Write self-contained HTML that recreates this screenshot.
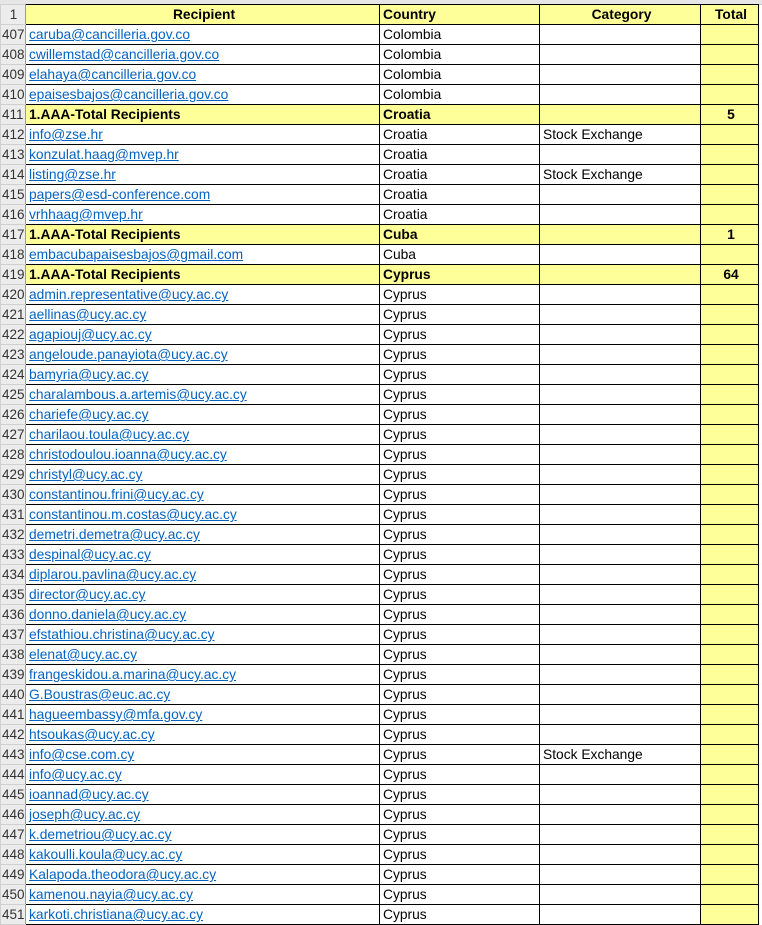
<!DOCTYPE html>
<html><head><meta charset="utf-8"><style>
html,body{margin:0;padding:0;background:#fff;width:762px;height:923px;overflow:hidden}
.top{position:absolute;left:0;top:0;width:762px;height:4px;background:#e6e6e6;border-bottom:1px solid #c8c8c8}
table{position:absolute;left:0;top:4px;border-collapse:collapse;table-layout:fixed;font-family:"Liberation Sans",sans-serif;font-size:13.8px;color:#000}
td{height:19px;padding:0 0 0 3px;border:1px solid #000;white-space:nowrap;overflow:hidden;line-height:18px;vertical-align:bottom}
td.n{background:#ececec;color:#333;border:1px solid #d0d0d0;border-right:1px solid #9a9a9a;padding:0 0 0 1px;text-align:left;font-size:13.5px}
td.y{background:#ffff99}
tr.h td{font-weight:bold;text-align:center;background:#ffff99}
tr.h td.n{background:#ececec;font-weight:normal}
tr.t td{background:#ffff99;font-weight:bold}
tr.t td.n{background:#ececec;font-weight:normal}
td.c{text-align:center}
a{color:#0563c1;text-decoration:underline}
</style></head><body>
<div class="top"></div>
<table>
<colgroup><col style="width:25px"><col style="width:354px"><col style="width:160px"><col style="width:161px"><col style="width:58px"></colgroup>
<tr class="h"><td class="n" style="text-align:center">1</td><td>Recipient</td><td style="text-align:left">Country</td><td>Category</td><td>Total</td></tr>
<tr><td class="n">407</td><td><a>caruba@cancilleria.gov.co</a></td><td>Colombia</td><td></td><td class="y"></td></tr>
<tr><td class="n">408</td><td><a>cwillemstad@cancilleria.gov.co</a></td><td>Colombia</td><td></td><td class="y"></td></tr>
<tr><td class="n">409</td><td><a>elahaya@cancilleria.gov.co</a></td><td>Colombia</td><td></td><td class="y"></td></tr>
<tr><td class="n">410</td><td><a>epaisesbajos@cancilleria.gov.co</a></td><td>Colombia</td><td></td><td class="y"></td></tr>
<tr class="t"><td class="n">411</td><td>1.AAA-Total Recipients</td><td>Croatia</td><td></td><td class="c">5</td></tr>
<tr><td class="n">412</td><td><a>info@zse.hr</a></td><td>Croatia</td><td>Stock Exchange</td><td class="y"></td></tr>
<tr><td class="n">413</td><td><a>konzulat.haag@mvep.hr</a></td><td>Croatia</td><td></td><td class="y"></td></tr>
<tr><td class="n">414</td><td><a>listing@zse.hr</a></td><td>Croatia</td><td>Stock Exchange</td><td class="y"></td></tr>
<tr><td class="n">415</td><td><a>papers@esd-conference.com</a></td><td>Croatia</td><td></td><td class="y"></td></tr>
<tr><td class="n">416</td><td><a>vrhhaag@mvep.hr</a></td><td>Croatia</td><td></td><td class="y"></td></tr>
<tr class="t"><td class="n">417</td><td>1.AAA-Total Recipients</td><td>Cuba</td><td></td><td class="c">1</td></tr>
<tr><td class="n">418</td><td><a>embacubapaisesbajos@gmail.com</a></td><td>Cuba</td><td></td><td class="y"></td></tr>
<tr class="t"><td class="n">419</td><td>1.AAA-Total Recipients</td><td>Cyprus</td><td></td><td class="c">64</td></tr>
<tr><td class="n">420</td><td><a>admin.representative@ucy.ac.cy</a></td><td>Cyprus</td><td></td><td class="y"></td></tr>
<tr><td class="n">421</td><td><a>aellinas@ucy.ac.cy</a></td><td>Cyprus</td><td></td><td class="y"></td></tr>
<tr><td class="n">422</td><td><a>agapiouj@ucy.ac.cy</a></td><td>Cyprus</td><td></td><td class="y"></td></tr>
<tr><td class="n">423</td><td><a>angeloude.panayiota@ucy.ac.cy</a></td><td>Cyprus</td><td></td><td class="y"></td></tr>
<tr><td class="n">424</td><td><a>bamyria@ucy.ac.cy</a></td><td>Cyprus</td><td></td><td class="y"></td></tr>
<tr><td class="n">425</td><td><a>charalambous.a.artemis@ucy.ac.cy</a></td><td>Cyprus</td><td></td><td class="y"></td></tr>
<tr><td class="n">426</td><td><a>chariefe@ucy.ac.cy</a></td><td>Cyprus</td><td></td><td class="y"></td></tr>
<tr><td class="n">427</td><td><a>charilaou.toula@ucy.ac.cy</a></td><td>Cyprus</td><td></td><td class="y"></td></tr>
<tr><td class="n">428</td><td><a>christodoulou.ioanna@ucy.ac.cy</a></td><td>Cyprus</td><td></td><td class="y"></td></tr>
<tr><td class="n">429</td><td><a>christyl@ucy.ac.cy</a></td><td>Cyprus</td><td></td><td class="y"></td></tr>
<tr><td class="n">430</td><td><a>constantinou.frini@ucy.ac.cy</a></td><td>Cyprus</td><td></td><td class="y"></td></tr>
<tr><td class="n">431</td><td><a>constantinou.m.costas@ucy.ac.cy</a></td><td>Cyprus</td><td></td><td class="y"></td></tr>
<tr><td class="n">432</td><td><a>demetri.demetra@ucy.ac.cy</a></td><td>Cyprus</td><td></td><td class="y"></td></tr>
<tr><td class="n">433</td><td><a>despinal@ucy.ac.cy</a></td><td>Cyprus</td><td></td><td class="y"></td></tr>
<tr><td class="n">434</td><td><a>diplarou.pavlina@ucy.ac.cy</a></td><td>Cyprus</td><td></td><td class="y"></td></tr>
<tr><td class="n">435</td><td><a>director@ucy.ac.cy</a></td><td>Cyprus</td><td></td><td class="y"></td></tr>
<tr><td class="n">436</td><td><a>donno.daniela@ucy.ac.cy</a></td><td>Cyprus</td><td></td><td class="y"></td></tr>
<tr><td class="n">437</td><td><a>efstathiou.christina@ucy.ac.cy</a></td><td>Cyprus</td><td></td><td class="y"></td></tr>
<tr><td class="n">438</td><td><a>elenat@ucy.ac.cy</a></td><td>Cyprus</td><td></td><td class="y"></td></tr>
<tr><td class="n">439</td><td><a>frangeskidou.a.marina@ucy.ac.cy</a></td><td>Cyprus</td><td></td><td class="y"></td></tr>
<tr><td class="n">440</td><td><a>G.Boustras@euc.ac.cy</a></td><td>Cyprus</td><td></td><td class="y"></td></tr>
<tr><td class="n">441</td><td><a>hagueembassy@mfa.gov.cy</a></td><td>Cyprus</td><td></td><td class="y"></td></tr>
<tr><td class="n">442</td><td><a>htsoukas@ucy.ac.cy</a></td><td>Cyprus</td><td></td><td class="y"></td></tr>
<tr><td class="n">443</td><td><a>info@cse.com.cy</a></td><td>Cyprus</td><td>Stock Exchange</td><td class="y"></td></tr>
<tr><td class="n">444</td><td><a>info@ucy.ac.cy</a></td><td>Cyprus</td><td></td><td class="y"></td></tr>
<tr><td class="n">445</td><td><a>ioannad@ucy.ac.cy</a></td><td>Cyprus</td><td></td><td class="y"></td></tr>
<tr><td class="n">446</td><td><a>joseph@ucy.ac.cy</a></td><td>Cyprus</td><td></td><td class="y"></td></tr>
<tr><td class="n">447</td><td><a>k.demetriou@ucy.ac.cy</a></td><td>Cyprus</td><td></td><td class="y"></td></tr>
<tr><td class="n">448</td><td><a>kakoulli.koula@ucy.ac.cy</a></td><td>Cyprus</td><td></td><td class="y"></td></tr>
<tr><td class="n">449</td><td><a>Kalapoda.theodora@ucy.ac.cy</a></td><td>Cyprus</td><td></td><td class="y"></td></tr>
<tr><td class="n">450</td><td><a>kamenou.nayia@ucy.ac.cy</a></td><td>Cyprus</td><td></td><td class="y"></td></tr>
<tr><td class="n">451</td><td><a>karkoti.christiana@ucy.ac.cy</a></td><td>Cyprus</td><td></td><td class="y"></td></tr>
</table>
</body></html>
